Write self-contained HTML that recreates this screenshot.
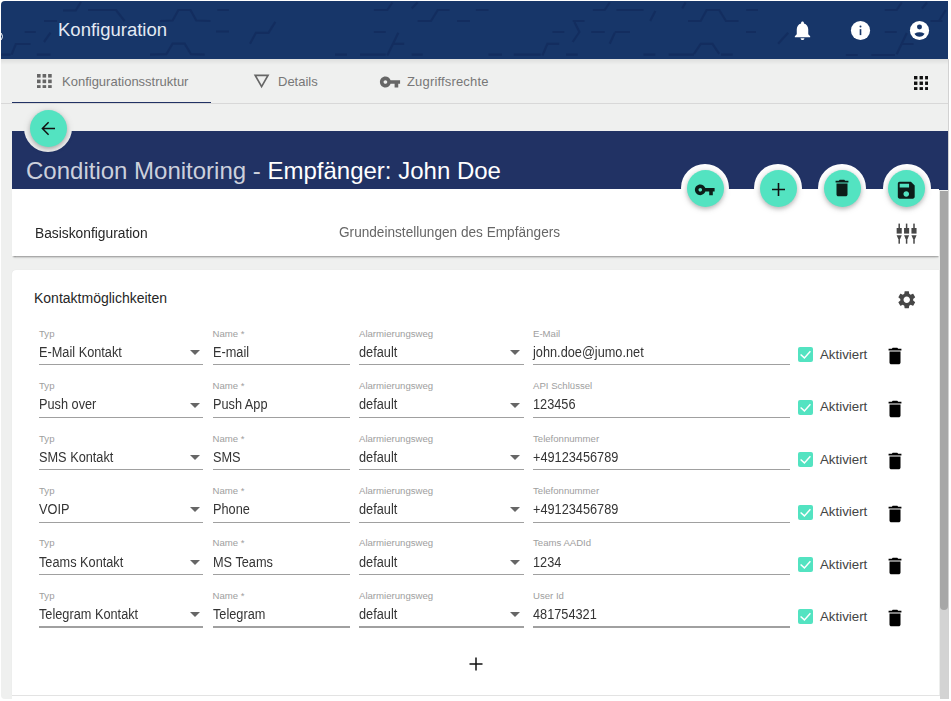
<!DOCTYPE html>
<html><head><meta charset="utf-8">
<style>
*{box-sizing:border-box;margin:0;padding:0}
html,body{width:951px;height:701px;overflow:hidden;background:#fff;font-family:"Liberation Sans",sans-serif}
.abs{position:absolute}
#app{position:absolute;left:0;top:0;width:951px;height:701px;overflow:hidden}
#bg{position:absolute;left:1px;top:1px;width:947px;height:698px;background:#eff0ef;border-radius:4px}
#hdr{position:absolute;left:1px;top:1px;width:947px;height:58px;background:#173669;border-top-left-radius:4px;overflow:hidden}
#hdrt{position:absolute;left:58px;top:21px;font-size:18.5px;line-height:18px;color:#e4eaf3;white-space:nowrap}
.tab{position:absolute;top:75px;font-size:13px;line-height:13px;color:#777;white-space:nowrap}
#banner{position:absolute;left:12px;top:131px;width:936px;height:58.5px;background:#213264}
#ttl{position:absolute;left:26px;top:159px;font-size:24px;line-height:24px;color:#ccd0dc;white-space:nowrap}
#ttl b{font-weight:normal;color:#fff}
.card{position:absolute;left:12px;width:927px;background:#fff}
.c1{box-shadow:0 1.5px 1.5px -0.5px rgba(0,0,0,.38),0 3px 3px -2px rgba(0,0,0,.12)}
.c2{border-radius:4px 0 0 0;box-shadow:0 0 1px rgba(0,0,0,.10)}
.ring{position:absolute;width:48px;height:48px;border-radius:50%}
.fab{position:absolute;width:37px;height:37px;border-radius:50%;background:#53e3c1;box-shadow:0 2px 4px rgba(0,0,0,.22),0 1px 8px rgba(0,0,0,.12)}
.fab svg{position:absolute}
.lbl{position:absolute;font-size:9.6px;line-height:10px;color:#9e9e9e;white-space:nowrap}
.val{position:absolute;font-size:14px;line-height:14px;color:#343434;transform:scaleX(0.91);transform-origin:0 0;white-space:nowrap}
.ul{position:absolute;height:1.3px;background:#a0a0a0}
.arr{position:absolute;width:0;height:0;border-left:5px solid transparent;border-right:5px solid transparent;border-top:5px solid #666}
.cb{position:absolute;width:15px;height:15px;background:#53e3c1;border-radius:2px}
.cb svg{position:absolute;left:0;top:0}
.akt{position:absolute;font-size:13.3px;line-height:14px;color:#444;white-space:nowrap}
#sb{position:absolute;left:940px;top:190.6px;width:8px;height:508.4px;background:#d3d3d3}
#sbt{position:absolute;left:940px;top:190.6px;width:8px;height:419px;background:#a7a7a7;border-radius:0 0 4px 4px}

</style></head>
<body>
<div id="app">
<div id="bg"></div>
<div id="hdr"><svg class="abs" style="left:0;top:0;filter:blur(0.45px)" width="947" height="58" viewBox="1 1 947 58"><path d="M63.0 10.5L75.7 10.5L81.0 2.0M44.0 21.0L57.0 21.0M50.5 32.6L44.0 42.0M24.7 32.0L35.8 32.0M11.6 54.7L15.8 44.0L30.5 44.0M0.0 54.7L10.5 54.7M36.8 54.7L50.5 54.7M88.0 10.0L116.0 10.0L124.6 21.0M160.0 21.0L172.6 20.5L178.4 10.0L190.5 10.0L196.3 20.5L210.5 21.0M217.3 10.0L228.9 10.0M150.0 54.7L166.3 54.2L172.6 43.6L184.7 43.6L191.0 54.2L204.7 54.7M216.0 31.5L229.0 31.5M250.0 43.8L255.9 32.8L268.5 32.8L275.3 21.9M373.9 10.0L387.3 10.0L392.4 2.5M373.9 32.0L385.7 32.0M398.3 32.8L387.3 55.5M392.4 43.8L404.2 43.8M335.0 54.7L347.0 54.7M360.0 54.7L385.7 54.7M411.7 8.4L417.6 2.5M417.6 21.0L431.0 21.0L437.8 10.0L449.6 10.0M457.0 21.0L470.0 21.0M411.7 54.7L422.7 54.7M475.9 10.0L488.5 10.0M592.9 10.0L604.7 10.0L609.7 2.5M616.5 10.0L643.5 10.0M572.7 21.0L584.5 21.0M574.4 21.9L579.4 32.0L572.7 42.0M552.5 32.0L564.3 32.0M591.2 32.0L604.7 32.0M614.8 32.0L630.0 32.0M614.8 32.8L609.7 43.8M542.4 55.5L547.4 43.8L559.2 43.8M513.8 54.7L540.7 54.7M488.5 54.7L502.0 54.7M566.0 54.7L577.7 54.7M655.3 11.0L650.2 21.0M682.2 8.4L685.6 2.5M688.0 21.0L700.7 21.0L706.6 10.0L719.2 10.0L726.0 21.0L738.6 21.0M746.2 10.0L758.0 10.0M746.0 32.0L756.0 32.0M694.0 53.9L700.7 43.8L712.5 43.8L719.2 53.9M668.7 54.7L694.0 54.7M643.5 54.7L655.3 54.7M721.0 54.7L732.7 54.7M788.2 32.8L778.1 43.8M884.8 10.0L896.7 10.0L901.7 2.5M922.0 8.5L927.0 2.5M930.5 21.0L942.4 21.0M884.8 32.0L896.7 32.0M906.8 33.0L896.7 54.2M901.7 44.0L913.6 44.0M845.9 55.0L857.7 55.0M871.3 55.0L895.0 55.0M945.7 10.0L939.0 21.0" stroke="#112a5a" stroke-width="2.2" fill="none" opacity="0.65" stroke-linecap="butt"/></svg></div>
<div class="abs" style="left:-6.3px;top:31.6px;width:9.5px;height:9.5px;border-radius:50%;border:1.9px solid #fff"></div>
<div class="abs" style="left:1px;top:59px;width:947px;height:6px;background:linear-gradient(rgba(0,0,0,.075),rgba(0,0,0,0))"></div>
<div id="hdrt">Konfiguration</div>
<svg class="abs" style="left:790.5px;top:19.4px" width="23" height="23" viewBox="0 0 24 24"><path fill="#fff" d="M12 22c1.1 0 2-.9 2-2h-4c0 1.1.89 2 2 2zm6-6v-5c0-3.07-1.64-5.64-4.5-6.32V4c0-.83-.67-1.5-1.5-1.5s-1.5.67-1.5 1.5v.68C7.63 5.36 6 7.92 6 11v5l-2 2v1h16v-1l-2-2z"/></svg>
<svg class="abs" style="left:849px;top:19px" width="23" height="23" viewBox="0 0 24 24"><circle cx="12" cy="12" r="10" fill="#fff"/><rect x="11.15" y="10.6" width="1.7" height="6.2" fill="#173669"/><circle cx="12" cy="7.9" r="1.05" fill="#173669"/></svg>
<svg class="abs" style="left:908px;top:19px" width="23" height="23" viewBox="0 0 24 24"><circle cx="12" cy="12" r="10" fill="#fff"/><circle cx="12" cy="8.3" r="2.6" fill="#173669"/><path d="M6.7 15.3Q12 12.2 17.3 15.3Q15.6 18.4 12 18.4Q8.4 18.4 6.7 15.3z" fill="#173669"/></svg>

<svg class="abs" style="left:37.3px;top:73.7px" width="14.72" height="14.72"><g fill="#666"><rect x="0.00" y="0.00" width="3.6" height="3.6"/><rect x="5.56" y="0.00" width="3.6" height="3.6"/><rect x="11.12" y="0.00" width="3.6" height="3.6"/><rect x="0.00" y="5.56" width="3.6" height="3.6"/><rect x="5.56" y="5.56" width="3.6" height="3.6"/><rect x="11.12" y="5.56" width="3.6" height="3.6"/><rect x="0.00" y="11.12" width="3.6" height="3.6"/><rect x="5.56" y="11.12" width="3.6" height="3.6"/><rect x="11.12" y="11.12" width="3.6" height="3.6"/></g></svg>
<div class="tab" style="left:62px">Konfigurationsstruktur</div>
<svg class="abs" style="left:252px;top:72px" width="20" height="18" viewBox="0 0 20 18"><path d="M3.2 3.4h12.8L9.6 14.6z" fill="none" stroke="#666" stroke-width="1.7" stroke-linejoin="miter"/></svg>
<div class="tab" style="left:278px">Details</div>
<svg class="abs" style="left:379px;top:70.5px" width="22" height="22" viewBox="0 0 24 24"><path fill="#666" d="M12.65 10C11.83 7.67 9.61 6 7 6c-3.31 0-6 2.69-6 6s2.69 6 6 6c2.61 0 4.83-1.67 5.65-4H17v4h4v-4h2v-4H12.65zM7 14c-1.1 0-2-.9-2-2s.9-2 2-2 2 .9 2 2-.9 2-2 2z"/></svg>
<div class="tab" style="left:407px;letter-spacing:0.17px">Zugriffsrechte</div>
<svg class="abs" style="left:913.8px;top:75.9px" width="14.50" height="14.50"><g fill="#111"><rect x="0.00" y="0.00" width="3.4" height="3.4"/><rect x="5.55" y="0.00" width="3.4" height="3.4"/><rect x="11.10" y="0.00" width="3.4" height="3.4"/><rect x="0.00" y="5.55" width="3.4" height="3.4"/><rect x="5.55" y="5.55" width="3.4" height="3.4"/><rect x="11.10" y="5.55" width="3.4" height="3.4"/><rect x="0.00" y="11.10" width="3.4" height="3.4"/><rect x="5.55" y="11.10" width="3.4" height="3.4"/><rect x="11.10" y="11.10" width="3.4" height="3.4"/></g></svg>
<div class="abs" style="left:1px;top:103px;width:947px;height:1px;background:#d8d8d8"></div>
<div class="abs" style="left:12px;top:101.6px;width:199px;height:1.6px;background:#213264"></div>

<div id="banner"></div>
<div class="ring" style="left:24.2px;top:104px;background:#eff0ef"></div>
<div class="fab" style="left:29.7px;top:109.5px"><svg style="left:11px;top:11px" width="15" height="15" viewBox="0 0 15 15"><path d="M14 7.5H1.5M7.6 1.3L1.4 7.5l6.2 6.2" fill="none" stroke="#111" stroke-width="1.5"/></svg></div>
<div id="ttl">Condition Monitoring - <b>Empfänger: John Doe</b></div>

<div class="card c1" style="top:189.4px;height:66.2px"></div>
<div class="abs" style="left:34.5px;top:225.6px;font-size:14px;line-height:14px;color:#262626;white-space:nowrap;transform:scaleX(0.985);transform-origin:0 0">Basiskonfiguration</div>
<div class="abs" style="left:338.6px;top:225.2px;font-size:14px;line-height:14px;color:#666;white-space:nowrap;transform:scaleX(0.973);transform-origin:0 0">Grundeinstellungen des Empfängers</div>
<svg class="abs" style="left:896px;top:222px" width="22" height="23" viewBox="0 0 22 23"><g fill="#474747"><rect x="2.45" y="1.6" width="1.5" height="5"/><rect x="0.65" y="6" width="5.1" height="5.6"/><path d="M0.65 13.3h5.1l-1.6 3.7h-1.9z"/><rect x="2.45" y="16.5" width="1.5" height="5.2"/><rect x="9.85" y="1.6" width="1.5" height="5"/><rect x="8.05" y="6" width="5.1" height="5.6"/><path d="M8.05 13.3h5.1l-1.6 3.7h-1.9z"/><rect x="9.85" y="16.5" width="1.5" height="5.2"/><rect x="17.25" y="1.6" width="1.5" height="5"/><rect x="15.45" y="6" width="5.1" height="5.6"/><path d="M15.45 13.3h5.1l-1.6 3.7h-1.9z"/><rect x="17.25" y="16.5" width="1.5" height="5.2"/></g></svg>

<div class="ring" style="left:681.3px;top:164.2px;background:#fff"></div>
<div class="ring" style="left:754.3px;top:164.2px;background:#fff"></div>
<div class="ring" style="left:818.3px;top:164.2px;background:#fff"></div>
<div class="ring" style="left:882.6px;top:164.2px;background:#fff"></div>
<div class="fab" style="left:686.8px;top:169.7px"><svg style="left:7.6px;top:9.2px" width="21.5" height="21.5" viewBox="0 0 24 24"><path fill="#0c1d19" d="M12.65 10C11.83 7.67 9.61 6 7 6c-3.31 0-6 2.69-6 6s2.69 6 6 6c2.61 0 4.83-1.67 5.65-4H17v4h4v-4h2v-4H12.65zM7 14c-1.1 0-2-.9-2-2s.9-2 2-2 2 .9 2 2-.9 2-2 2z"/></svg></div>
<div class="fab" style="left:759.8px;top:169.7px"><svg style="left:12px;top:13.3px" width="13" height="13" viewBox="0 0 13 13"><path d="M6.5 0v13M0 6.5h13" stroke="#111" stroke-width="1.6"/></svg></div>
<div class="fab" style="left:823.8px;top:169.7px"><svg style="left:7.5px;top:7px" width="22" height="22" viewBox="0 0 24 24"><path fill="#0c1d19" d="M6 19c0 1.1.9 2 2 2h8c1.1 0 2-.9 2-2V7H6v12zM19 4h-3.5l-1-1h-5l-1 1H5v2h14V4z"/></svg></div>
<div class="fab" style="left:888.1px;top:169.7px"><svg style="left:7.3px;top:9.2px" width="22.5" height="22.5" viewBox="0 0 24 24"><path fill="#0c1d19" d="M17 3H5c-1.11 0-2 .9-2 2v14c0 1.1.89 2 2 2h14c1.1 0 2-.9 2-2V7l-4-4zm-5 16c-1.66 0-3-1.34-3-3s1.34-3 3-3 3 1.34 3 3-1.34 3-3 3zm3-10H5V5h10v4z"/></svg></div>

<div class="card c2" style="top:270px;height:425px"></div>
<div class="abs" style="left:34px;top:291.4px;font-size:14px;line-height:14px;color:#262626;white-space:nowrap">Kontaktmöglichkeiten</div>
<svg class="abs" style="left:895.75px;top:288.75px" width="21.5" height="21.5" viewBox="0 0 24 24"><path fill="#474747" d="M19.14 12.94c.04-.3.06-.61.06-.94 0-.32-.02-.64-.07-.94l2.03-1.58c.18-.14.23-.41.12-.61l-1.92-3.32c-.12-.22-.37-.29-.59-.22l-2.39.96c-.5-.38-1.03-.7-1.62-.94l-.36-2.540c-.04-.24-.24-.41-.48-.41h-3.84c-.24 0-.43.17-.47.41l-.36 2.54c-.59.24-1.13.57-1.62.94l-2.39-.96c-.22-.08-.47 0-.59.22L2.74 8.87c-.12.21-.08.47.12.61l2.03 1.58c-.05.3-.09.63-.09.94s.02.64.07.94l-2.03 1.58c-.18.14-.23.41-.12.61l1.92 3.320c.12.22.37.29.59.22l2.39-.96c.5.38 1.03.7 1.62.94l.36 2.54c.05.24.24.41.48.41h3.84c.24 0 .44-.17.47-.41l.36-2.54c.59-.24 1.13-.56 1.62-.94l2.39.96c.22.08.47 0 .59-.22l1.92-3.32c.12-.22.07-.47-.12-.61l-2.01-1.58zM12 15.6c-1.98 0-3.6-1.62-3.6-3.6s1.62-3.6 3.6-3.6 3.6 1.62 3.6 3.6-1.62 3.6-3.6 3.6z"/></svg>
<svg class="abs" style="left:469px;top:656.5px" width="14" height="14" viewBox="0 0 14 14"><path d="M7 0.5v13M0.5 7h13" stroke="#111" stroke-width="1.5"/></svg>
<div class="abs" style="left:12px;top:695px;width:928px;height:4px;background:#fff"></div>
<div class="abs" style="left:12px;top:694.6px;width:928px;height:1.3px;background:#e3e3e3"></div>
<div id="sb"></div><div id="sbt"></div>
<div class="abs" style="left:948px;top:59px;width:1px;height:640px;background:#d2d2d2"></div>

<div class="lbl" style="left:39px;top:328.60px">Typ</div>
<div class="lbl" style="left:212.5px;top:328.60px">Name *</div>
<div class="lbl" style="left:359px;top:328.60px">Alarmierungsweg</div>
<div class="lbl" style="left:533px;top:328.60px">E-Mail</div>
<div class="val" style="left:39px;top:345.00px">E-Mail Kontakt</div>
<div class="val" style="left:212.5px;top:345.00px">E-mail</div>
<div class="val" style="left:359px;top:345.00px">default</div>
<div class="val" style="left:533px;top:345.00px">john.doe@jumo.net</div>
<div class="ul" style="left:39px;top:364.20px;width:164px"></div>
<div class="ul" style="left:212.5px;top:364.20px;width:137.5px"></div>
<div class="ul" style="left:359px;top:364.20px;width:165px"></div>
<div class="ul" style="left:533px;top:364.20px;width:256.5px"></div>
<div class="arr" style="left:189.8px;top:350.10px"></div>
<div class="arr" style="left:510.4px;top:350.10px"></div>
<div class="cb" style="left:798px;top:347.20px"><svg width="15" height="15" viewBox="0 0 15 15"><path d="M2.6 7.5L6.4 10.9L12.4 4.3" fill="none" stroke="#fff" stroke-width="1.45"/></svg></div>
<div class="akt" style="left:820px;top:348.00px">Aktiviert</div>
<svg class="abs" style="left:884px;top:345.20px" width="22" height="22" viewBox="0 0 24 24"><path d="M6 19c0 1.1.9 2 2 2h8c1.1 0 2-.9 2-2V7H6v12zM19 4h-3.5l-1-1h-5l-1 1H5v2h14V4z" fill="#000"/></svg><div class="lbl" style="left:39px;top:381.05px">Typ</div>
<div class="lbl" style="left:212.5px;top:381.05px">Name *</div>
<div class="lbl" style="left:359px;top:381.05px">Alarmierungsweg</div>
<div class="lbl" style="left:533px;top:381.05px">API Schlüssel</div>
<div class="val" style="left:39px;top:397.45px">Push over</div>
<div class="val" style="left:212.5px;top:397.45px">Push App</div>
<div class="val" style="left:359px;top:397.45px">default</div>
<div class="val" style="left:533px;top:397.45px">123456</div>
<div class="ul" style="left:39px;top:416.65px;width:164px"></div>
<div class="ul" style="left:212.5px;top:416.65px;width:137.5px"></div>
<div class="ul" style="left:359px;top:416.65px;width:165px"></div>
<div class="ul" style="left:533px;top:416.65px;width:256.5px"></div>
<div class="arr" style="left:189.8px;top:402.55px"></div>
<div class="arr" style="left:510.4px;top:402.55px"></div>
<div class="cb" style="left:798px;top:399.65px"><svg width="15" height="15" viewBox="0 0 15 15"><path d="M2.6 7.5L6.4 10.9L12.4 4.3" fill="none" stroke="#fff" stroke-width="1.45"/></svg></div>
<div class="akt" style="left:820px;top:400.45px">Aktiviert</div>
<svg class="abs" style="left:884px;top:397.65px" width="22" height="22" viewBox="0 0 24 24"><path d="M6 19c0 1.1.9 2 2 2h8c1.1 0 2-.9 2-2V7H6v12zM19 4h-3.5l-1-1h-5l-1 1H5v2h14V4z" fill="#000"/></svg><div class="lbl" style="left:39px;top:433.50px">Typ</div>
<div class="lbl" style="left:212.5px;top:433.50px">Name *</div>
<div class="lbl" style="left:359px;top:433.50px">Alarmierungsweg</div>
<div class="lbl" style="left:533px;top:433.50px">Telefonnummer</div>
<div class="val" style="left:39px;top:449.90px">SMS Kontakt</div>
<div class="val" style="left:212.5px;top:449.90px">SMS</div>
<div class="val" style="left:359px;top:449.90px">default</div>
<div class="val" style="left:533px;top:449.90px">+49123456789</div>
<div class="ul" style="left:39px;top:469.10px;width:164px"></div>
<div class="ul" style="left:212.5px;top:469.10px;width:137.5px"></div>
<div class="ul" style="left:359px;top:469.10px;width:165px"></div>
<div class="ul" style="left:533px;top:469.10px;width:256.5px"></div>
<div class="arr" style="left:189.8px;top:455.00px"></div>
<div class="arr" style="left:510.4px;top:455.00px"></div>
<div class="cb" style="left:798px;top:452.10px"><svg width="15" height="15" viewBox="0 0 15 15"><path d="M2.6 7.5L6.4 10.9L12.4 4.3" fill="none" stroke="#fff" stroke-width="1.45"/></svg></div>
<div class="akt" style="left:820px;top:452.90px">Aktiviert</div>
<svg class="abs" style="left:884px;top:450.10px" width="22" height="22" viewBox="0 0 24 24"><path d="M6 19c0 1.1.9 2 2 2h8c1.1 0 2-.9 2-2V7H6v12zM19 4h-3.5l-1-1h-5l-1 1H5v2h14V4z" fill="#000"/></svg><div class="lbl" style="left:39px;top:485.95px">Typ</div>
<div class="lbl" style="left:212.5px;top:485.95px">Name *</div>
<div class="lbl" style="left:359px;top:485.95px">Alarmierungsweg</div>
<div class="lbl" style="left:533px;top:485.95px">Telefonnummer</div>
<div class="val" style="left:39px;top:502.35px">VOIP</div>
<div class="val" style="left:212.5px;top:502.35px">Phone</div>
<div class="val" style="left:359px;top:502.35px">default</div>
<div class="val" style="left:533px;top:502.35px">+49123456789</div>
<div class="ul" style="left:39px;top:521.55px;width:164px"></div>
<div class="ul" style="left:212.5px;top:521.55px;width:137.5px"></div>
<div class="ul" style="left:359px;top:521.55px;width:165px"></div>
<div class="ul" style="left:533px;top:521.55px;width:256.5px"></div>
<div class="arr" style="left:189.8px;top:507.45px"></div>
<div class="arr" style="left:510.4px;top:507.45px"></div>
<div class="cb" style="left:798px;top:504.55px"><svg width="15" height="15" viewBox="0 0 15 15"><path d="M2.6 7.5L6.4 10.9L12.4 4.3" fill="none" stroke="#fff" stroke-width="1.45"/></svg></div>
<div class="akt" style="left:820px;top:505.35px">Aktiviert</div>
<svg class="abs" style="left:884px;top:502.55px" width="22" height="22" viewBox="0 0 24 24"><path d="M6 19c0 1.1.9 2 2 2h8c1.1 0 2-.9 2-2V7H6v12zM19 4h-3.5l-1-1h-5l-1 1H5v2h14V4z" fill="#000"/></svg><div class="lbl" style="left:39px;top:538.40px">Typ</div>
<div class="lbl" style="left:212.5px;top:538.40px">Name *</div>
<div class="lbl" style="left:359px;top:538.40px">Alarmierungsweg</div>
<div class="lbl" style="left:533px;top:538.40px">Teams AADId</div>
<div class="val" style="left:39px;top:554.80px">Teams Kontakt</div>
<div class="val" style="left:212.5px;top:554.80px">MS Teams</div>
<div class="val" style="left:359px;top:554.80px">default</div>
<div class="val" style="left:533px;top:554.80px">1234</div>
<div class="ul" style="left:39px;top:574.00px;width:164px"></div>
<div class="ul" style="left:212.5px;top:574.00px;width:137.5px"></div>
<div class="ul" style="left:359px;top:574.00px;width:165px"></div>
<div class="ul" style="left:533px;top:574.00px;width:256.5px"></div>
<div class="arr" style="left:189.8px;top:559.90px"></div>
<div class="arr" style="left:510.4px;top:559.90px"></div>
<div class="cb" style="left:798px;top:557.00px"><svg width="15" height="15" viewBox="0 0 15 15"><path d="M2.6 7.5L6.4 10.9L12.4 4.3" fill="none" stroke="#fff" stroke-width="1.45"/></svg></div>
<div class="akt" style="left:820px;top:557.80px">Aktiviert</div>
<svg class="abs" style="left:884px;top:555.00px" width="22" height="22" viewBox="0 0 24 24"><path d="M6 19c0 1.1.9 2 2 2h8c1.1 0 2-.9 2-2V7H6v12zM19 4h-3.5l-1-1h-5l-1 1H5v2h14V4z" fill="#000"/></svg><div class="lbl" style="left:39px;top:590.85px">Typ</div>
<div class="lbl" style="left:212.5px;top:590.85px">Name *</div>
<div class="lbl" style="left:359px;top:590.85px">Alarmierungsweg</div>
<div class="lbl" style="left:533px;top:590.85px">User Id</div>
<div class="val" style="left:39px;top:607.25px">Telegram Kontakt</div>
<div class="val" style="left:212.5px;top:607.25px">Telegram</div>
<div class="val" style="left:359px;top:607.25px">default</div>
<div class="val" style="left:533px;top:607.25px">481754321</div>
<div class="ul" style="left:39px;top:626.45px;width:164px"></div>
<div class="ul" style="left:212.5px;top:626.45px;width:137.5px"></div>
<div class="ul" style="left:359px;top:626.45px;width:165px"></div>
<div class="ul" style="left:533px;top:626.45px;width:256.5px"></div>
<div class="arr" style="left:189.8px;top:612.35px"></div>
<div class="arr" style="left:510.4px;top:612.35px"></div>
<div class="cb" style="left:798px;top:609.45px"><svg width="15" height="15" viewBox="0 0 15 15"><path d="M2.6 7.5L6.4 10.9L12.4 4.3" fill="none" stroke="#fff" stroke-width="1.45"/></svg></div>
<div class="akt" style="left:820px;top:610.25px">Aktiviert</div>
<svg class="abs" style="left:884px;top:607.45px" width="22" height="22" viewBox="0 0 24 24"><path d="M6 19c0 1.1.9 2 2 2h8c1.1 0 2-.9 2-2V7H6v12zM19 4h-3.5l-1-1h-5l-1 1H5v2h14V4z" fill="#000"/></svg>
</div>
</body></html>
